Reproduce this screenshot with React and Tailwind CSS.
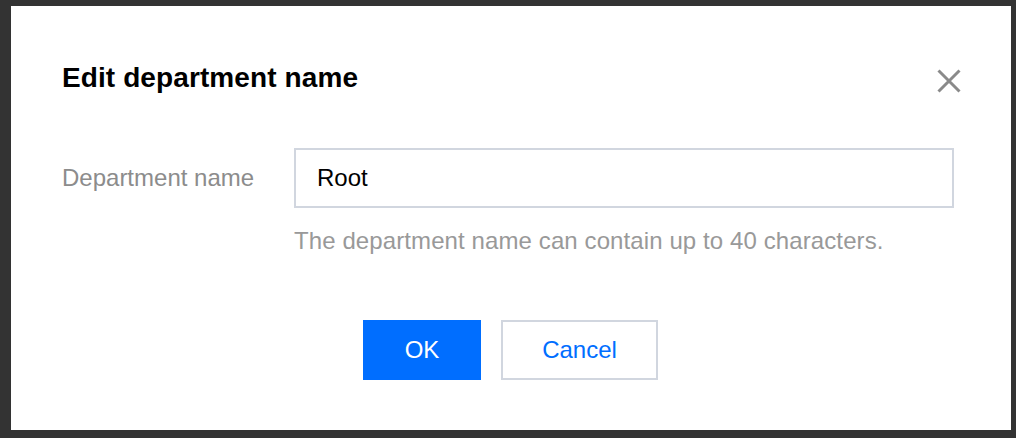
import { useState } from "react";

export default function App() {
  const [name, setName] = useState("Root");

  return (
    <div
      className="h-[438px] w-[1016px] overflow-hidden bg-[#333333] pt-[6px] pl-[11px]"
      style={{ fontFamily: '"Liberation Sans", Arial, Helvetica, sans-serif' }}
    >
      <div className="h-[424px] w-[1000px] bg-white pt-[52px] pl-[51px] pr-[50px]">
        {/* Header */}
        <div className="flex items-start justify-between">
          <h2 className="text-[28px] leading-[40px] font-bold text-black tracking-[0.1px]">
            Edit department name
          </h2>
          <button className="mt-[11px] text-[#8a8a8a]" aria-label="Close">
            <svg width="24" height="24" viewBox="0 0 24 24" fill="none">
              <path d="M1.5 1.5L22.5 22.5M22.5 1.5L1.5 22.5" stroke="currentColor" strokeWidth="3" />
            </svg>
          </button>
        </div>

        {/* Form row */}
        <div className="mt-[50px] flex">
          <label className="w-[232px] shrink-0 text-[24px] leading-[60px] text-[#8c8c8c]">
            Department name
          </label>
          <div className="flex flex-col">
            <input
              value={name}
              onChange={(e) => setName(e.target.value)}
              className="h-[60px] w-[660px] border-2 border-[#d1d6df] pl-[21px] text-[24px] text-black outline-none"
            />
            <p className="mt-[17px] text-[24px] leading-[32px] text-[#999999] tracking-[0.1px]">
              The department name can contain up to 40 characters.
            </p>
          </div>
        </div>

        {/* Footer */}
        <div className="mt-[63px] flex justify-center gap-[20px] pr-[2px]">
          <button className="h-[60px] w-[118px] bg-[#006eff] text-[24px] text-white">
            OK
          </button>
          <button className="h-[60px] w-[157px] border-2 border-[#d1d6df] bg-white text-[24px] text-[#006eff]">
            Cancel
          </button>
        </div>
      </div>
    </div>
  );
}
